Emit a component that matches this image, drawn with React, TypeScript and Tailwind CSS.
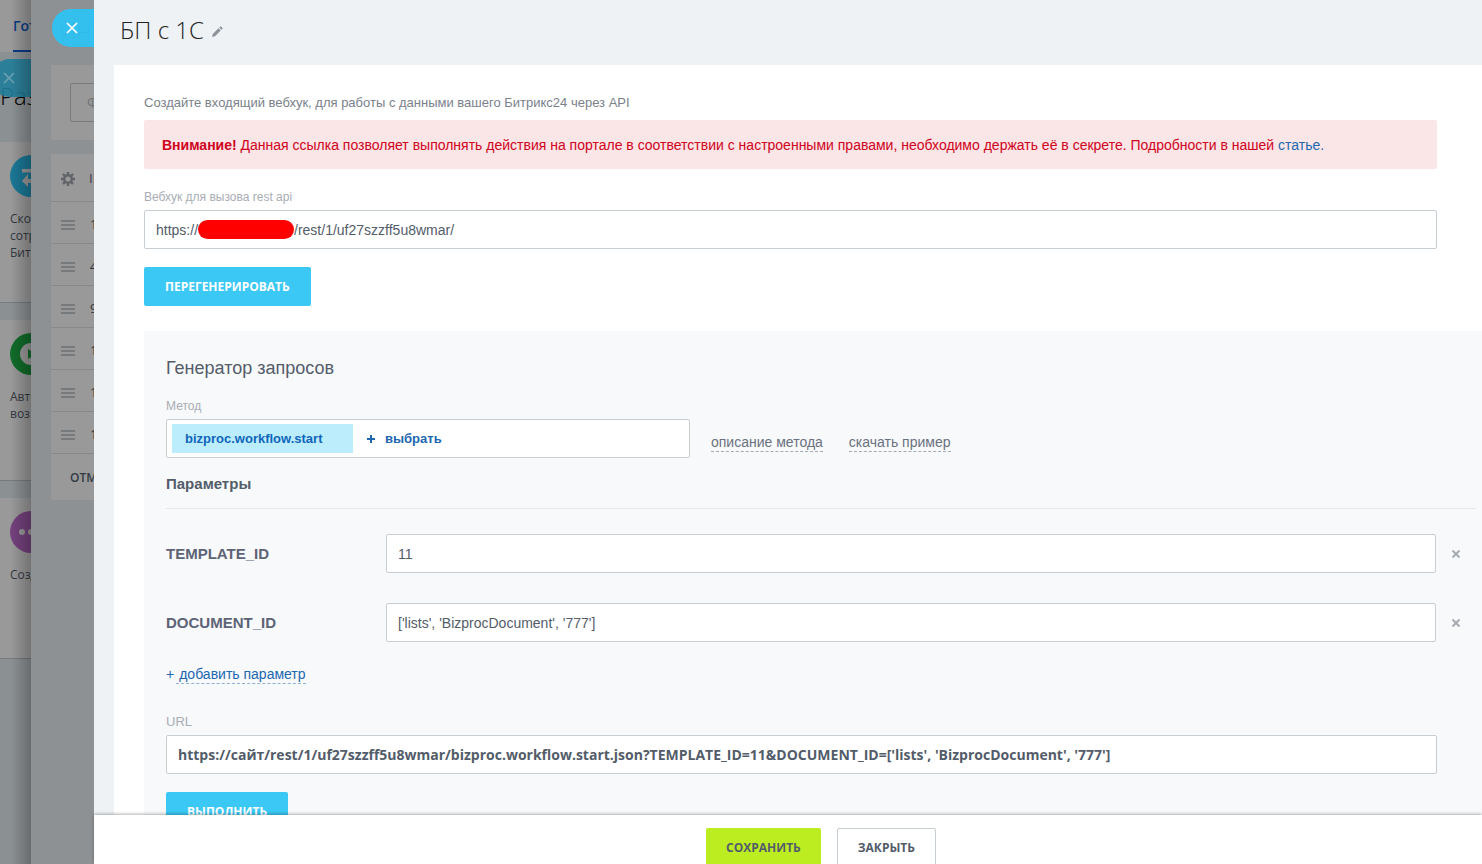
import { useState, type ReactNode } from 'react'

const tiles = [
  { id: 'exchange', lines: ['Ско', 'сотр', 'Бит'] },
  { id: 'auto', lines: ['Авто', 'воз'] },
  { id: 'chat', lines: ['Созд'] },
]

const gridRows = ['1', '4', '9', '1', '1', '1']

const inputClass =
  'h-[39px] w-full rounded-xs border border-[#c6cdd3] bg-white px-[11px] text-[#535c69] outline-none focus:border-[#66afe9]'

const blueButton =
  "h-[39px] rounded-xs bg-[#3bc8f5] px-[21px] font-['Open_Sans',sans-serif] text-xs font-bold text-white hover:bg-[#3eddff]"

function TileIcon({ id }: { id: string }) {
  if (id === 'exchange') {
    return (
      <svg className="block h-[42px] w-[42px]" viewBox="0 0 42 42">
        <circle cx="21" cy="21" r="21" fill="#1b7896" />
        <path d="M12 14h13v-5l7 6.500-7 6v-4H12z" fill="#999" />
        <path d="M30 24H18v-5l-6 7 6 6v-4h12z" fill="#999" />
      </svg>
    )
  }
  if (id === 'auto') {
    return (
      <svg className="block h-[42px] w-[42px]" viewBox="0 0 42 42">
        <circle cx="21" cy="21" r="21" fill="#116c2a" />
        <circle cx="21" cy="21" r="11" fill="#999" />
        <path d="M18 16l8 5-8 5z" fill="#116c2a" />
      </svg>
    )
  }
  return (
    <svg className="block h-[42px] w-[42px]" viewBox="0 0 42 42">
      <circle cx="21" cy="21" r="21" fill="#74417d" />
      <circle cx="12" cy="21" r="3" fill="#999" />
      <circle cx="21" cy="21" r="3" fill="#999" />
      <circle cx="30" cy="21" r="3" fill="#999" />
    </svg>
  )
}

function CloseIcon() {
  return (
    <svg className="h-3 w-3" viewBox="0 0 12 12" fill="none" stroke="currentColor" strokeWidth="1.700">
      <path d="M1 1l10 10M11 1L1 11" />
    </svg>
  )
}

function GearIcon() {
  return (
    <svg className="h-[14px] w-[14px] shrink-0" viewBox="0 0 14 14">
      <g fill="none" stroke="#606468">
        <circle cx="7" cy="7" r="3.800" strokeWidth="2.400" />
        <path
          d="M7 0v2.500M7 11.500V14M0 7h2.500M11.500 7H14M2 2l1.800 1.800M10.200 10.200L12 12M12 2l-1.800 1.800M3.800 10.200L2 12"
          strokeWidth="2.400"
        />
      </g>
    </svg>
  )
}

function FieldLabel({ htmlFor, children }: { htmlFor: string; children: ReactNode }) {
  return (
    <label htmlFor={htmlFor} className="block text-xs leading-4 text-[#a8adb4]">
      {children}
    </label>
  )
}

/* Page behind both sliders */
function PageStrip() {
  return (
    <div className="relative w-[31px] shrink-0 overflow-hidden bg-[#8b9093] font-['Open_Sans',sans-serif] whitespace-nowrap">
      <div className="h-[52px] bg-[#999] pl-[13px]">
        <div className="h-[52px] border-b-2 border-[#0b3a86] pt-[14px] text-sm leading-6 font-semibold text-[#0b3a86]">
          Гот
        </div>
      </div>
      <div className="h-[90px] pt-7 text-2xl leading-8 font-light text-black">Раз</div>
      <div className="flex flex-col gap-[17px]">
        {tiles.map((tile) => (
          <div key={tile.id} className="h-[161px] border-b border-[#777b7e] bg-[#999] pt-[13px] pl-[10px]">
            <TileIcon id={tile.id} />
            <div className="mt-[13px] text-xs leading-[17px] text-[#323840]">
              {tile.lines.map((line) => (
                <div key={line}>{line}</div>
              ))}
            </div>
          </div>
        ))}
      </div>
      <button
        aria-label="Закрыть"
        className="absolute top-[59px] right-0 flex h-[38px] w-10 items-center rounded-l-full bg-[#217d9a]/90 pl-3 text-[#6da0b3]"
      >
        <CloseIcon />
      </button>
      <div className="pointer-events-none absolute inset-y-0 right-0 w-5 bg-linear-to-r from-transparent to-black/25" />
    </div>
  )
}

/* First slider, dimmed by the one above it */
function ListStrip() {
  return (
    <div className="relative flex w-[63px] shrink-0 flex-col overflow-hidden bg-[#8e9193] pl-5 font-['Open_Sans',sans-serif] whitespace-nowrap">
      <div className="h-[65px] pt-[14px] pl-2 text-2xl leading-8 font-light text-[#222]">Инт</div>
      <div className="h-[75px] bg-[#999] pt-[18px] pl-[19px]">
        <div className="h-[39px] w-40 rounded-xs border border-[#777b80] pl-4 text-sm leading-[37px] text-[#707478]">
          Ф
        </div>
      </div>
      <div className="mt-[14px] bg-[#999]">
        <div className="flex h-[48px] items-center gap-[14px] border-b border-[#868a8c] pt-[2px] pl-[10px] text-[13px] text-[#3a3f58]">
          <GearIcon />
          <span>ID</span>
        </div>
        {gridRows.map((row, i) => (
          <div
            key={i}
            className="flex h-[42px] items-center gap-[15px] border-b border-[#868a8c] pt-1 pl-[10px] text-[13px] text-[#30353c]"
          >
            <div className="flex w-[14px] shrink-0 flex-col gap-[2px]">
              <div className="h-[2px] bg-[#777a7c]" />
              <div className="h-[2px] bg-[#777a7c]" />
              <div className="h-[2px] bg-[#777a7c]" />
            </div>
            <span>{row}</span>
          </div>
        ))}
        <div className="h-[46px] pl-[19px] text-xs leading-[48px] font-semibold text-[#343a44]">ОТМ</div>
      </div>
      <button
        aria-label="Закрыть"
        className="absolute top-[9px] right-0 flex h-[38px] w-[42px] items-center rounded-l-full bg-[#2fc3f3]/95 pl-[14px] text-white"
      >
        <CloseIcon />
      </button>
    </div>
  )
}

export default function App() {
  const [path, setPath] = useState('/rest/1/uf27szzff5u8wmar/')
  const [params, setParams] = useState([
    { name: 'TEMPLATE_ID', value: '11' },
    { name: 'DOCUMENT_ID', value: "['lists', 'BizprocDocument', '777']" },
  ])
  const query = params.map((p) => `${p.name}=${p.value}`).join('&')

  const changeParam = (name: string, value: string) =>
    setParams(params.map((p) => (p.name === name ? { ...p, value } : p)))

  return (
    <div className="flex h-screen overflow-hidden font-['Liberation_Sans',sans-serif] text-sm text-[#535c69]">
      <PageStrip />
      <ListStrip />

      <div className="flex min-w-0 flex-1 flex-col bg-[#eef2f4]">
        <main className="min-h-0 flex-1 overflow-hidden pl-5">
          <header className="flex h-[65px] items-center gap-2 pb-[5px] pl-[6px]">
            <h1 className="font-['Open_Sans',sans-serif] text-2xl leading-8 font-light text-[#222]">БП с 1С</h1>
            <button aria-label="Изменить название" className="pt-[2px]">
              <svg className="h-[11px] w-[11px]" viewBox="0 0 11 11" fill="#8b9299">
                <path d="M0 11l0.800-3L6.500 2.300l2.200 2.200L3 10.200z" />
                <path d="M7.200 1.600L8.700 0.200 10.800 2.300 9.400 3.800z" />
              </svg>
            </button>
          </header>

          <div className="bg-white pt-[30px] pl-[30px]">
            <div className="pr-[45px]">
              <p className="text-[13px] leading-4 text-[#7a818b]">
                Создайте входящий вебхук, для работы с данными вашего Битрикс24 через API
              </p>
              <div className="mt-[9px] rounded-xs bg-[#fae5e7] px-[18px] pt-[15px] pb-[13px] leading-[21px] text-[#d0021b]">
                <b>Внимание!</b> Данная ссылка позволяет выполнять действия на портале в соответствии с настроенными
                правами, необходимо держать её в секрете. Подробности в нашей{' '}
                <a href="#article" className="text-[#2067b0]">
                  статье.
                </a>
              </div>

              <div className="mt-5">
                <FieldLabel htmlFor="webhook">Вебхук для вызова rest api</FieldLabel>
              </div>
              <div className="mt-[5px] flex h-[39px] items-center rounded-xs border border-[#c6cdd3] bg-white px-[11px]">
                <span>https://</span>
                <span className="h-[19px] w-24 shrink-0 rounded-full bg-[#f00]" />
                <input
                  id="webhook"
                  className="min-w-0 flex-1 outline-none"
                  value={path}
                  onChange={(e) => setPath(e.target.value)}
                />
              </div>
              <button className={`mt-[18px] ${blueButton}`}>ПЕРЕГЕНЕРИРОВАТЬ</button>
            </div>

            {/* Request generator */}
            <section className="mt-[25px] bg-[#f8f9fb] pt-[25px] pr-[6px] pb-10 pl-[22px]">
              <h2 className="text-lg leading-6">Генератор запросов</h2>
              <div className="mt-[18px]">
                <FieldLabel htmlFor="method">Метод</FieldLabel>
              </div>
              <div className="mt-[5px] flex items-center gap-[21px]">
                <div className="flex h-[39px] w-[524px] items-center rounded-xs border border-[#c6cdd3] bg-white px-[5px] text-[13px] font-bold">
                  <span className="h-[29px] w-[181px] bg-[#bcedfc] px-[13px] leading-[29px] text-[#1066bb]">
                    bizproc.workflow.start
                  </span>
                  <button id="method" className="ml-[14px] flex items-center gap-[10px] leading-[29px] text-[#2067b0]">
                    <svg className="h-2 w-2" viewBox="0 0 8 8" fill="currentColor">
                      <path d="M3 0h2v3h3v2H5v3H3V5H0V3h3z" />
                    </svg>
                    выбрать
                  </button>
                </div>
                <div className="flex gap-[26px] pt-2 leading-[18px] text-[#6a7180]">
                  <a href="#description" className="border-b border-dashed border-[#a5aab2]">
                    описание метода
                  </a>
                  <a href="#example" className="border-b border-dashed border-[#a5aab2]">
                    скачать пример
                  </a>
                </div>
              </div>

              <h3 className="mt-4 border-b border-[#e4e7ea] pb-[14px] text-[15px] leading-5 font-bold">Параметры</h3>
              <div className="mt-[25px] flex flex-col gap-[30px]">
                {params.map((param) => (
                  <div key={param.name} className="flex items-center">
                    <label htmlFor={param.name} className="w-[220px] shrink-0 text-[15px] font-bold text-[#5c6376]">
                      {param.name}
                    </label>
                    <input
                      id={param.name}
                      className={inputClass}
                      value={param.value}
                      onChange={(e) => changeParam(param.name, e.target.value)}
                    />
                    <button
                      aria-label={`Удалить ${param.name}`}
                      className="flex h-[39px] w-10 shrink-0 items-center justify-center text-[#a5abb2]"
                      onClick={() => setParams(params.filter((p) => p.name !== param.name))}
                    >
                      <svg className="h-2 w-2" viewBox="0 0 8 8" stroke="currentColor" strokeWidth="2">
                        <path d="M0.500 0.500l7 7M7.500 0.500l-7 7" />
                      </svg>
                    </button>
                  </div>
                ))}
              </div>

              <button className="mt-[23px] flex gap-[2px] leading-[18px] text-[#2067b0]">
                <span>+</span>
                <span className="border-b border-dashed border-[#8fb0d5] pl-[3px]">добавить параметр</span>
              </button>

              <div className="mt-[30px] pr-[39px]">
                <label htmlFor="url" className="block text-[13px] leading-4 text-[#a8adb4]">
                  URL
                </label>
                <input
                  id="url"
                  readOnly
                  className={`mt-[5px] font-['Open_Sans',sans-serif] font-bold ${inputClass}`}
                  value={`https://сайт${path}bizproc.workflow.start.json?${query}`}
                />
              </div>
              <button className={`mt-[18px] ${blueButton}`}>ВЫПОЛНИТЬ</button>
            </section>
          </div>
        </main>

        <footer className="relative flex h-[49px] shrink-0 items-start justify-center gap-4 bg-white pt-[13px] pl-[66px] font-['Open_Sans',sans-serif] text-xs font-bold shadow-[0_-1px_3px_rgba(0,0,0,0.3)]">
          <button className="h-[39px] rounded-xs bg-[#bbed21] px-5">СОХРАНИТЬ</button>
          <button className="h-[39px] rounded-xs border border-[#c6cdd3] bg-white px-5">ЗАКРЫТЬ</button>
        </footer>
      </div>
    </div>
  )
}
